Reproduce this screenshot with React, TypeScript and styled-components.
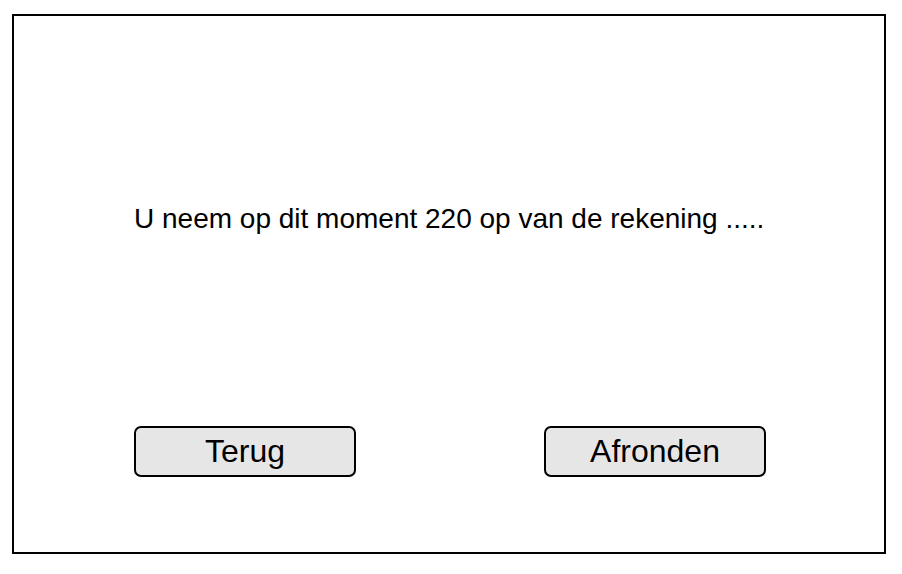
import React from "react";
import styled, { createGlobalStyle } from "styled-components";

const GlobalStyle = createGlobalStyle`
  html, body {
    margin: 0;
    padding: 0;
    background: #ffffff;
  }
  body {
    font-family: "Liberation Sans", Arial, sans-serif;
    color: #000000;
  }
  * { box-sizing: border-box; }
`;

const Frame = styled.div`
  margin: 14px 0 0 12px;
  width: 874px;
  height: 540px;
  border: 2px solid #000;
  display: flex;
  flex-direction: column;
  padding: 187px 118px 0 120px;
`;

const Message = styled.p`
  margin: 0;
  font-size: 28px;
  line-height: 32px;
  white-space: nowrap;
`;

const ButtonRow = styled.div`
  margin-top: 191px;
  width: 632px;
  display: flex;
  justify-content: space-between;
`;

const Button = styled.button`
  width: 222px;
  height: 51px;
  border: 2px solid #000;
  border-radius: 7px;
  background: #e6e6e6;
  font-family: "Liberation Sans", Arial, sans-serif;
  font-size: 32px;
  line-height: 1;
  color: #000;
  padding: 0 0 1px;
  cursor: pointer;
`;

export default function App() {
  return (
    <>
      <GlobalStyle />
      <Frame>
        <Message>U neem op dit moment 220 op van de rekening .....</Message>
        <ButtonRow>
          <Button>Terug</Button>
          <Button>Afronden</Button>
        </ButtonRow>
      </Frame>
    </>
  );
}
